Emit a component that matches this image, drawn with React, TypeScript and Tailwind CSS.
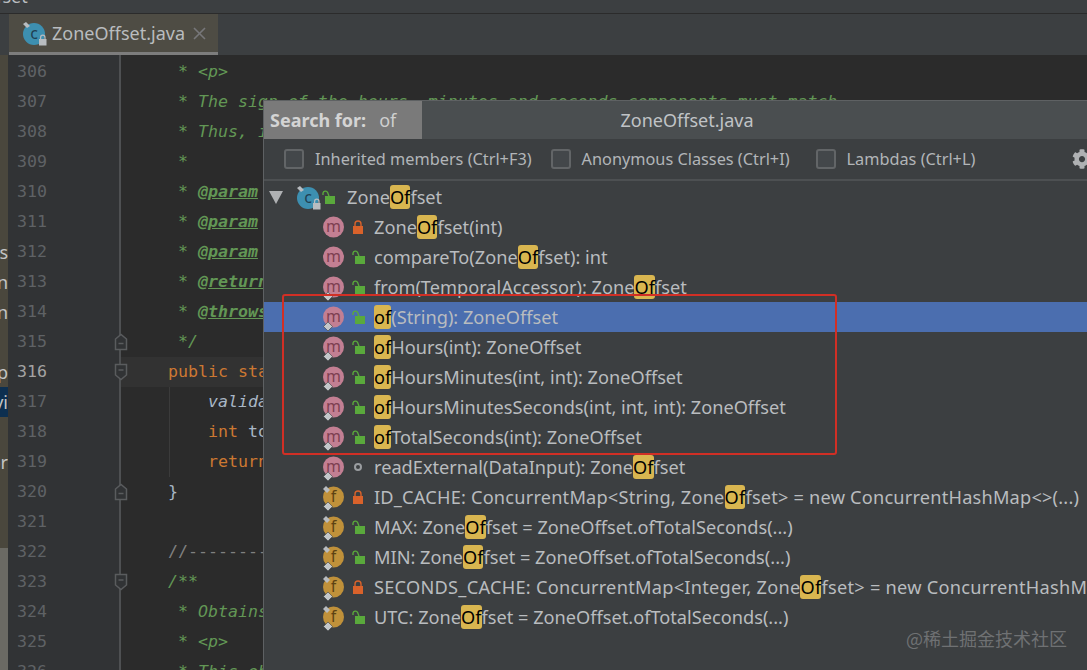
import { FaCog } from 'react-icons/fa'

const uiFont = "font-['Noto_Sans',sans-serif]"
const monoFont = "font-['DejaVu_Sans_Mono',monospace]"

type Seg = { t: string; c?: string }

const green = 'text-[#629755] italic'
const tag = 'font-bold underline text-[#629755] italic'

const codeLines: Seg[][] = [
  [{ t: ' * <p>', c: green }],
  [{ t: ' * The sign of the hours, minutes and seconds components must match', c: green }],
  [{ t: ' * Thus, if the hours is negative', c: green }],
  [{ t: ' *', c: green }],
  [{ t: ' * ', c: green }, { t: '@param', c: tag }],
  [{ t: ' * ', c: green }, { t: '@param', c: tag }],
  [{ t: ' * ', c: green }, { t: '@param', c: tag }],
  [{ t: ' * ', c: green }, { t: '@return', c: tag }],
  [{ t: ' * ', c: green }, { t: '@throws', c: tag }],
  [{ t: ' */', c: green }],
  [{ t: 'public static', c: 'text-[#cc7832]' }],
  [{ t: '    validate(hours)', c: 'text-[#a9b7c6] italic' }],
  [{ t: '    int', c: 'text-[#cc7832]' }, { t: ' totalSeconds', c: 'text-[#a9b7c6]' }],
  [{ t: '    return', c: 'text-[#cc7832]' }],
  [{ t: '}', c: 'text-[#a9b7c6]' }],
  [{ t: ' ' }],
  [{ t: '//-----------------------', c: 'text-[#808080]' }],
  [{ t: '/**', c: green }],
  [{ t: ' * Obtains', c: green }],
  [{ t: ' * <p>', c: green }],
  [{ t: ' * This obtains', c: green }],
]

function FoldMark({ dir }: { dir: 'up' | 'down' }) {
  return (
    <svg width="14" height="18" viewBox="0 0 14 18" className="absolute left-[106px] top-[6px]">
      <path
        d={dir === 'up' ? 'M1.5 16.5V6L7 1.5 12.5 6v10.5z' : 'M1.5 1.5V12L7 16.5 12.5 12V1.5z'}
        fill="#313335"
        stroke="#5a5c5e"
        strokeWidth="1.5"
      />
      <path d={dir === 'up' ? 'M4.5 10.5h5' : 'M4.5 7h5'} stroke="#5a5c5e" strokeWidth="1.5" />
    </svg>
  )
}

function ClassIcon() {
  return (
    <svg width="25" height="25" viewBox="0 0 25 25" className="shrink-0">
      <circle cx="12" cy="13" r="11" fill="#3d8fb0" />
      <text x="12" y="18" textAnchor="middle" fontSize="16" fill="#1f3f52" fontFamily="Noto Sans">
        c
      </text>
      <path d="M1 3l3-2 4 4-3 2z" fill="#b8bcc0" />
      <rect x="17" y="18" width="7.5" height="6.5" fill="#b8bcc0" />
      <path d="M18.6 18v-1.6a2.2 2.2 0 0 1 4.4 0V18" fill="none" stroke="#b8bcc0" strokeWidth="1.2" />
    </svg>
  )
}

function MemberIcon({ kind, isStatic }: { kind: 'm' | 'f'; isStatic: boolean }) {
  return (
    <svg width="26" height="28" viewBox="0 0 26 28" className="-ml-[3px] shrink-0 overflow-visible">
      <circle cx="13.5" cy="14" r="10.5" fill={kind === 'm' ? '#c37f93' : '#c0913a'} />
      <text
        x="13.5"
        y="19"
        textAnchor="middle"
        fontSize="16"
        fill={kind === 'm' ? '#7e3f52' : '#5c4212'}
        fontFamily="Noto Sans"
      >
        {kind}
      </text>
      {kind === 'f' && <path d="M3 6l3-3 4 4-3 3z" fill="#b8bcc0" />}
      {isStatic && <path d="M8 19l4.5 4.5L8 28l-4.5-4.5z" fill="#c4c7ca" stroke="#3c3f41" strokeWidth="0.6" />}
    </svg>
  )
}

function Lock({ type }: { type: 'open' | 'closed' | 'ring' }) {
  if (type === 'ring') {
    return (
      <svg width="13" height="14" viewBox="0 0 13 14" className="shrink-0">
        <circle cx="6" cy="7" r="3" fill="none" stroke="#9a9da0" strokeWidth="2" />
      </svg>
    )
  }
  if (type === 'closed') {
    return (
      <svg width="13" height="14" viewBox="0 0 13 14" className="shrink-0">
        <rect x="1" y="6" width="10" height="8" fill="#d9622b" />
        <path d="M3 6V4a3 3 0 0 1 6 0v2" fill="none" stroke="#d9622b" strokeWidth="1.4" />
      </svg>
    )
  }
  return (
    <svg width="13" height="14" viewBox="0 0 13 14" className="shrink-0">
      <rect x="3" y="6" width="10" height="8" fill="#5aa93c" />
      <path d="M1 5V3.2a2.4 2.4 0 0 1 4.6-.6L7 6" fill="none" stroke="#5aa93c" strokeWidth="1.4" />
    </svg>
  )
}

function Marked({ text }: { text: string }) {
  return (
    <>
      {text.split('|').map((s, i) =>
        i % 2 ? (
          <span key={i} className="inline-block rounded-[3px] bg-[#d9b650] leading-[24px] text-black">
            {s}
          </span>
        ) : (
          <span key={i}>{s}</span>
        ),
      )}
    </>
  )
}

type Row = {
  kind: 'm' | 'f'
  lock: 'open' | 'closed' | 'ring'
  isStatic?: boolean
  selected?: boolean
  track?: string
  text: string
}

const rows: Row[] = [
  { kind: 'm', lock: 'closed', text: 'Zone|Of|fset(int)' },
  { kind: 'm', lock: 'open', text: 'compareTo(Zone|Of|fset): int' },
  { kind: 'm', lock: 'open', isStatic: true, text: 'from(TemporalAccessor): Zone|Of|fset' },
  { kind: 'm', lock: 'open', isStatic: true, selected: true, text: '|of|(String): ZoneOffset' },
  { kind: 'm', lock: 'open', isStatic: true, text: '|of|Hours(int): ZoneOffset' },
  { kind: 'm', lock: 'open', isStatic: true, text: '|of|HoursMinutes(int, int): ZoneOffset' },
  { kind: 'm', lock: 'open', isStatic: true, text: '|of|HoursMinutesSeconds(int, int, int): ZoneOffset' },
  { kind: 'm', lock: 'open', isStatic: true, text: '|of|TotalSeconds(int): ZoneOffset' },
  { kind: 'm', lock: 'ring', isStatic: true, text: 'readExternal(DataInput): Zone|Of|fset' },
  {
    kind: 'f',
    lock: 'closed',
    isStatic: true,
    track: 'tracking-[0.2px]',
    text: 'ID_CACHE: ConcurrentMap<String, Zone|Of|fset> = new ConcurrentHashMap<>(...)',
  },
  { kind: 'f', lock: 'open', isStatic: true, text: 'MAX: Zone|Of|fset = ZoneOffset.ofTotalSeconds(...)' },
  { kind: 'f', lock: 'open', isStatic: true, text: 'MIN: Zone|Of|fset = ZoneOffset.ofTotalSeconds(...)' },
  {
    kind: 'f',
    lock: 'closed',
    isStatic: true,
    track: 'tracking-[0.26px]',
    text: 'SECONDS_CACHE: ConcurrentMap<Integer, Zone|Of|fset> = new ConcurrentHashMap<>(...)',
  },
  { kind: 'f', lock: 'open', isStatic: true, text: 'UTC: Zone|Of|fset = ZoneOffset.ofTotalSeconds(...)' },
]

function Check({ label, gap }: { label: string; gap: string }) {
  return (
    <div className={`flex items-center gap-[11px] ${gap}`}>
      <div className="h-[20px] w-[20px] rounded-[3px] border-2 border-[#626567] bg-[#43474a]" />
      <span>{label}</span>
    </div>
  )
}

const strip = ['s', 'n', 'n', '', 'ep', 'vi', '', 'or']

export default function App() {
  return (
    <div className={`relative flex h-[670px] w-[1087px] flex-col overflow-hidden bg-[#2b2b2b] ${uiFont}`}>
      {/* title strip */}
      <div className="flex h-[14px] items-start overflow-hidden border-b border-[#2b2b2b] bg-[#3c3f41] text-[18px] leading-[20px] text-[#b9bcbf]">
        <span className="-ml-[24px] -mt-[14px]">Offset</span>
      </div>

      {/* tabs */}
      <div className="flex h-[41px] bg-[#3c3f41] pl-[9px]">
        <div className="flex w-[209px] items-center border-b-[3px] border-[#7d7d7d] bg-[#4e4c44] pl-[13px] text-[18px] text-[#b9bcbf]">
          <ClassIcon />
          <span className="ml-[5px]">ZoneOffset.java</span>
          <svg width="13" height="13" viewBox="0 0 13 13" className="ml-[8px] shrink-0">
            <path d="M1 1l11 11M12 1L1 12" stroke="#77777a" strokeWidth="1.6" />
          </svg>
        </div>
      </div>

      {/* editor */}
      <div className={`flex min-h-0 flex-1 text-[16.6px] leading-[30px] ${monoFont}`}>
        <div className={`flex w-[8px] shrink-0 flex-col overflow-hidden bg-[#4a473d] pt-[182px] text-[18px] text-[#c4c4c4] ${uiFont}`}>
          {strip.map((c, i) => (
            <div key={i} className={`flex h-[30px] shrink-0 justify-end whitespace-nowrap ${c === 'vi' ? 'bg-[#0d2f50]' : ''}`}>
              {c}
            </div>
          ))}
          <div className="h-[71px] shrink-0" />
          <div className="flex-1 bg-[#6b6a64]" />
        </div>

        <div className="relative z-10 w-[113px] shrink-0 border-r-2 border-[#4e5052] bg-[#313335] pt-[2px]">
          {codeLines.map((_, i) => {
            const n = 306 + i
            return (
              <div key={n} className={`relative h-[30px] pl-[9px] ${n === 316 ? 'text-[#a4a3a3]' : 'text-[#5f6265]'}`}>
                {n}
                {(n === 315 || n === 320) && <FoldMark dir="up" />}
                {(n === 316 || n === 323) && <FoldMark dir="down" />}
              </div>
            )
          })}
        </div>

        <div className="relative min-w-0 flex-1 pt-[2px]">
          <div className="absolute left-[48px] top-[332px] h-[90px] w-px bg-[#3b3b3b]" />
          {codeLines.map((segs, i) => (
            <div key={i} className={`h-[30px] whitespace-pre pl-[47px] ${i === 10 ? 'bg-[#323232]' : ''}`}>
              {segs.map((s, j) => (
                <span key={j} className={s.c}>
                  {s.t}
                </span>
              ))}
            </div>
          ))}
        </div>
      </div>

      {/* structure popup */}
      <div className="absolute bottom-0 left-[263px] top-[100px] w-[840px] overflow-hidden border-l border-t border-[#5e6163] bg-[#3c3f41] text-[#b9bcbf]">
        <div className="flex h-[38px] items-center bg-[#4a4e50]">
          <div className="flex h-full w-[158px] shrink-0 items-center bg-[#7a7a7a] pl-[6px] text-[18px]">
            <span className="font-bold text-[#d4d4d4]">Search for:</span>
            <span className="ml-[13px] text-[#cfcfcf]">of</span>
          </div>
          <div className="w-[530px] text-center text-[18px] text-[#c0c3c6]">ZoneOffset.java</div>
        </div>
        <div className="flex h-[42px] items-center border-b-2 border-[#4d5052] pl-[20px] text-[16.3px] text-[#b2b5b8]">
          <Check label="Inherited members (Ctrl+F3)" gap="" />
          <Check label="Anonymous Classes (Ctrl+I)" gap="ml-[19px]" />
          <Check label="Lambdas (Ctrl+L)" gap="ml-[26px]" />
          <FaCog className="ml-[97px] shrink-0 text-[#afb1b3]" size={20} />
        </div>

        <div className="whitespace-pre pt-[1px] text-[18.2px]">
          <div className="flex h-[30px] items-center pl-[5px]">
            <svg width="14" height="13" viewBox="0 0 14 13" className="shrink-0">
              <path d="M0 0h14L7 13z" fill="#afb1b3" />
            </svg>
            <div className="ml-[13px] w-[26px] shrink-0">
              <ClassIcon />
            </div>
            <Lock type="open" />
            <span className="ml-[12px] mt-[1px]">
              <Marked text="Zone|Of|fset" />
            </span>
          </div>
          {rows.map((r, i) => (
            <div key={i} className={`flex h-[30px] items-center pl-[59px] ${r.selected ? 'bg-[#4b6eaf]' : ''}`}>
              <div className="w-[29px] shrink-0">
                <MemberIcon kind={r.kind} isStatic={!!r.isStatic} />
              </div>
              <Lock type={r.lock} />
              <span className={`ml-[9px] mt-[1px] ${r.track ?? ''}`}>
                <Marked text={r.text} />
              </span>
            </div>
          ))}
        </div>
      </div>

      {/* red annotation */}
      <div className="absolute left-[282px] top-[294px] h-[161px] w-[555px] rounded-[3px] border-2 border-[#d12f25]" />

      {/* watermark */}
      <div className="absolute left-[906px] top-[625px] font-['Noto_Sans_CJK_SC',sans-serif] text-[18px] leading-[26px] text-[#6f7173]">
        @稀土掘金技术社区
      </div>
    </div>
  )
}
